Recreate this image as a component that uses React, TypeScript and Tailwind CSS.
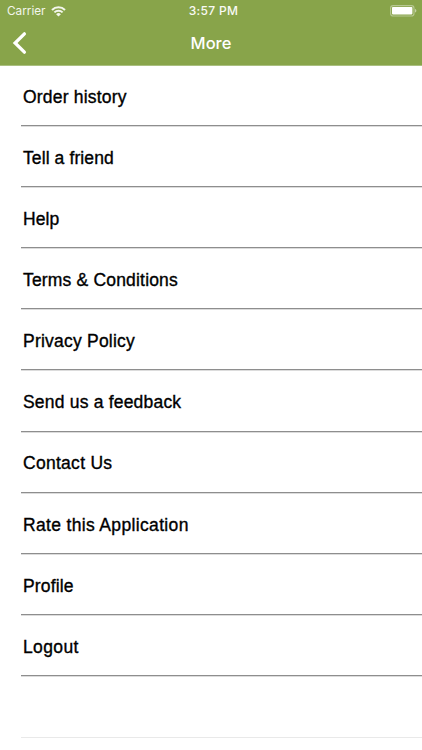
type MenuItem = {
  label: string;
  tracking: string;
};

const items: MenuItem[] = [
  { label: "Order history", tracking: "tracking-[0.2px]" },
  { label: "Tell a friend", tracking: "tracking-[0.1px]" },
  { label: "Help", tracking: "tracking-[0.1px]" },
  { label: "Terms & Conditions", tracking: "tracking-[0.18px]" },
  { label: "Privacy Policy", tracking: "tracking-[0.22px]" },
  { label: "Send us a feedback", tracking: "tracking-[0.2px]" },
  { label: "Contact Us", tracking: "tracking-[0.28px]" },
  { label: "Rate this Application", tracking: "tracking-[0.34px]" },
  { label: "Profile", tracking: "tracking-[0.15px]" },
  { label: "Logout", tracking: "tracking-[0.38px]" },
];

function WifiIcon() {
  return (
    <svg width="15" height="11" viewBox="0 0 15 11" fill="none" stroke="currentColor">
      <path d="M1 3.9a9.3 9.3 0 0 1 13 0" strokeWidth="2.1" />
      <path d="M3.4 6.4a5.8 5.8 0 0 1 8.2 0" strokeWidth="2" />
      <path d="M7.5 10.6 5.1 8.2a3.4 3.4 0 0 1 4.8 0Z" fill="currentColor" stroke="none" />
    </svg>
  );
}

function BatteryIcon() {
  return (
    <svg width="28" height="12" viewBox="0 0 28 12" fill="none">
      <rect x="0.6" y="0.6" width="23.4" height="10.4" rx="2.6" stroke="white" strokeOpacity="0.4" strokeWidth="1.1" />
      <rect x="2" y="2" width="20.4" height="7.4" rx="0.8" fill="white" />
      <path d="M25 4v3.6c.9-.3 1.4-1 1.4-1.8S25.9 4.3 25 4Z" fill="white" fillOpacity="0.5" />
    </svg>
  );
}

function StatusBar() {
  return (
    <div className="grid h-[22px] grid-cols-3 items-center pl-[7px] pr-[4px]">
      <div className="flex items-center gap-[5px] text-[#f3f6ec]">
        <span className="text-[11.75px] leading-[22px]">Carrier</span>
        <WifiIcon />
      </div>
      <div className="pl-[2px] text-center text-[12px] font-medium leading-[22px] tracking-[0.3px] text-[#f8faf4]">
        3:57 PM
      </div>
      <div className="flex justify-end">
        <BatteryIcon />
      </div>
    </div>
  );
}

function Header() {
  return (
    <header className="h-[66px] border-b border-[#aabf80] bg-[#88a44a] font-['Inter',sans-serif] text-white">
      <StatusBar />
      <div className="grid h-[43px] grid-cols-3 items-center">
        <button type="button" aria-label="Back" className="pb-[1px] pl-[12px]">
          <svg width="16" height="24" viewBox="0 0 16 24" fill="none" stroke="currentColor" strokeWidth="3.3">
            <path d="M12.4 2.8 3.1 12l9.3 9.2" strokeLinecap="round" />
          </svg>
        </button>
        <h1 className="text-center text-[16.5px] font-medium leading-[43px]">More</h1>
      </div>
    </header>
  );
}

export default function App() {
  return (
    <div className="h-[750px] w-full overflow-hidden bg-white">
      <Header />
      <ul className="-mt-px pl-[21px] font-['Liberation_Sans',sans-serif] text-[17.5px] text-black">
        {items.map((item) => (
          <li
            key={item.label}
            className="flex h-[61.1px] items-center border-b border-[#8e8e8e] pl-[2px] pt-[4px] shadow-[0_1px_0_#dcdcdc]"
          >
            <span className={`[-webkit-text-stroke:0.35px_black] ${item.tracking}`}>{item.label}</span>
          </li>
        ))}
        <li className="h-[62px] border-b border-[#e9e9e9]" />
      </ul>
    </div>
  );
}
